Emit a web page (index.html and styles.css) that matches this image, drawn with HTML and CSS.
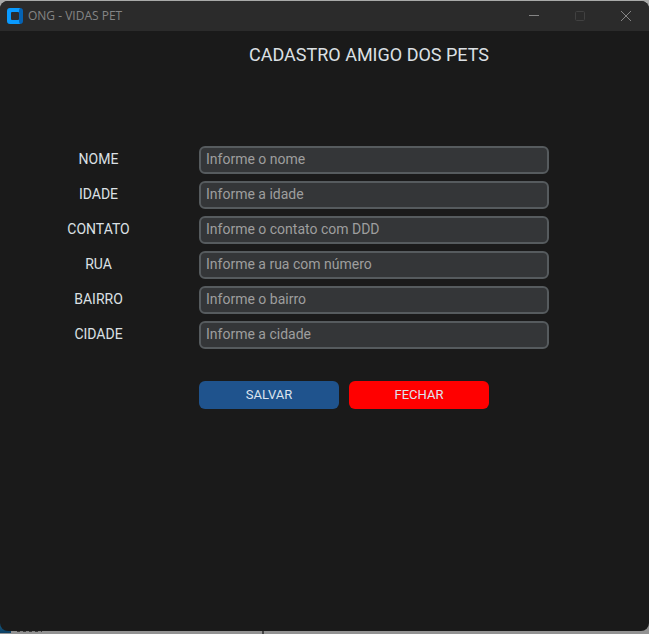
FILE: index.html
```html
<!DOCTYPE html>
<html lang="pt-BR">
<head>
<meta charset="utf-8">
<title>ONG - VIDAS PET</title>
<link rel="stylesheet" href="styles.css">
</head>
<body>
<div class="window">
  <header class="titlebar">
    <svg class="app-icon" width="16" height="16" viewBox="0 0 16 16" aria-hidden="true">
      <path fill="#0563b4" d="M10 0H13Q16 0 16 3V13Q16 16 13 16H10Z"/>
      <path fill="#0a9bff" d="M3 0H13Q12 1 12 3V13Q12 15 13 16H3Q0 16 0 13V3Q0 0 3 0Z"/>
      <rect x="4" y="4" width="8" height="8" rx="1" fill="#2b2b2b"/>
    </svg>
    <span class="app-name">ONG - VIDAS PET</span>
    <button class="control" type="button" aria-label="Minimizar"><svg width="10" height="10" viewBox="0 0 10 10"><path d="M0 4.5H10"/></svg></button>
    <button class="control control-disabled" type="button" aria-label="Maximizar" disabled><svg width="10" height="10" viewBox="0 0 10 10"><rect x=".5" y=".5" width="9" height="9" rx="1"/></svg></button>
    <button class="control" type="button" aria-label="Fechar janela"><svg width="10" height="10" viewBox="0 0 10 10"><path d="M0 0L10 10M10 0L0 10"/></svg></button>
  </header>
  <main class="content">
    <h1 class="heading">CADASTRO AMIGO DOS PETS</h1>
    <form class="form">
      <label class="label" for="nome">NOME</label>
      <input class="entry" id="nome" type="text" placeholder="Informe o nome">
      <label class="label" for="idade">IDADE</label>
      <input class="entry" id="idade" type="text" placeholder="Informe a idade">
      <label class="label" for="contato">CONTATO</label>
      <input class="entry" id="contato" type="text" placeholder="Informe o contato com DDD">
      <label class="label" for="rua">RUA</label>
      <input class="entry" id="rua" type="text" placeholder="Informe a rua com número">
      <label class="label" for="bairro">BAIRRO</label>
      <input class="entry" id="bairro" type="text" placeholder="Informe o bairro">
      <label class="label" for="cidade">CIDADE</label>
      <input class="entry" id="cidade" type="text" placeholder="Informe a cidade">
      <div class="actions">
        <button class="action save" type="button">SALVAR</button>
        <button class="action close" type="button">FECHAR</button>
      </div>
    </form>
  </main>
</div>
</body>
</html>
```
FILE: styles.css
```css
* {
  box-sizing: border-box;
}

/* Desktop edges that show around the window */
body {
  margin: 0;
  min-height: 100vh;
  padding: 1px 0 3px;
  display: flex;
  background:
    linear-gradient(#17628a, #0d3f63) 0 calc(100% - 1px) / 11px 12px no-repeat,
    repeating-linear-gradient(90deg, #3c3c3c 0 3px, #858585 3px 6px) 17px calc(100% - 2px) / 25px 1px no-repeat,
    linear-gradient(#444, #444) 262px 100% / 2px 3px no-repeat,
    linear-gradient(#a9aaa9 50%, #929292 50%);
  font-family: Roboto, sans-serif;
  color: #dce0e4;
}

.window {
  flex: 1;
  border-radius: 8px;
  overflow: hidden;
  background: #1a1a1a;
}

.titlebar {
  display: flex;
  align-items: center;
  height: 30px;
  padding-left: 7px;
  background: #2b2b2b;
}

.app-name {
  flex: 1;
  margin-left: 5px;
  font: 12px/16px "Open Sans", sans-serif;
  color: #858585;
}

.control {
  display: grid;
  place-items: center;
  width: 46px;
  height: 30px;
  padding: 0;
  border: 0;
  background: none;
  color: #858585;
}

.control-disabled {
  color: #414141;
}

.control svg {
  fill: none;
  stroke: currentColor;
}

.content {
  padding: 10px 0;
}

.heading {
  width: 340px;
  margin: 0 0 77px 199px;
  font-size: 18px;
  font-weight: 400;
  line-height: 28px;
  text-align: center;
}

.form {
  display: grid;
  grid-template-columns: 199px minmax(0, 350px);
  grid-auto-rows: 28px;
  row-gap: 7px;
}

.label {
  padding-right: 2px;
  font-size: 14px;
  line-height: 26px;
  text-align: center;
}

.entry {
  width: 100%;
  height: 28px;
  padding: 0 5px 2px;
  border: 2px solid #565b5e;
  border-radius: 6px;
  background: #343638;
  color: #dce4ee;
  font: 14px Roboto, sans-serif;
}

.entry::placeholder {
  color: #9e9e9e;
  opacity: 1;
}

.actions {
  grid-column: 2;
  display: flex;
  gap: 10px;
  margin-top: 25px;
}

.action {
  width: 140px;
  height: 28px;
  padding: 0 0 2px;
  border: 0;
  border-radius: 6px;
  font: 13px Roboto, sans-serif;
  color: #dce4ee;
}

.save {
  background: #1f538d;
}

.close {
  background: #ff0000;
}
```
